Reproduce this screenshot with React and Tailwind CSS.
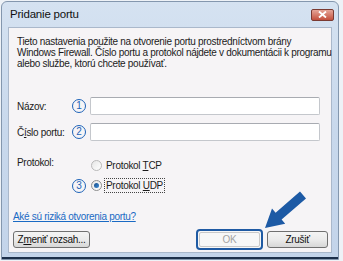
function Circled({ n }) {
  return (
    <span className="flex h-[14px] w-[14px] shrink-0 items-center justify-center rounded-full border-[1.5px] border-[#1d63b8] text-[10px] leading-none tracking-normal text-[#1d63b8]">
      {n}
    </span>
  );
}

function Radio({ checked, faded }) {
  return (
    <span
      className={`flex h-[11px] w-[11px] shrink-0 items-center justify-center rounded-full border ${
        faded ? "border-[#b9b9b9]" : "border-[#8e8f8f]"
      } bg-gradient-to-br from-[#e6e6e6] to-[#ffffff]`}
    >
      {checked && (
        <span className="h-[5px] w-[5px] rounded-full bg-gradient-to-br from-[#1a4f8a] to-[#3c8bd6]" />
      )}
    </span>
  );
}

export default function App() {
  return (
    <div
      className="relative h-[261px] w-[343px] overflow-hidden whitespace-nowrap bg-[#eef2f7] text-[10px] tracking-[-0.3px] text-[#1b1b1b]"
      style={{ fontFamily: '"Liberation Sans", Arial, sans-serif' }}
    >
      {/* Window */}
      <div className="ml-[1px] mt-[1px] flex h-[259px] w-[338px] flex-col rounded-t-[6px] border border-[#8497ae] bg-gradient-to-b from-[#d5e2f1] via-[#c8d8ec] to-[#c3d4ea]">
        {/* Title bar */}
        <div className="flex h-[25px] shrink-0 items-center justify-between pl-[8px] pr-[4px]">
          <span className="text-[11.5px] tracking-[-0.2px] text-[#111]">Pridanie portu</span>
          <span className="flex h-[12px] w-[23px] items-center justify-center rounded-[2px] border border-[#7a3a32] bg-gradient-to-b from-[#e5a598] to-[#c24e3c]">
            <svg width="9" height="7" viewBox="0 0 9 7">
              <path d="M1 0.5 L8 6.5 M8 0.5 L1 6.5" stroke="#ffffff" strokeWidth="1.8" />
            </svg>
          </span>
        </div>

        {/* Client area */}
        <div className="mx-[6px] flex h-[226px] shrink-0 flex-col border border-[#aab8cb] bg-[#f6f4f6] px-[8px] pt-[8px]">
          <p className="leading-[11px]">
            Tieto nastavenia použite na otvorenie portu prostredníctvom brány
            <br />
            Windows Firewall. Číslo portu a protokol nájdete v dokumentácii k programu
            <br />
            alebo službe, ktorú chcete používať.
          </p>

          {/* Name */}
          <div className="mt-[28px] flex h-[18px] items-center">
            <span className="w-[55px] shrink-0">Názov:</span>
            <Circled n="1" />
            <div className="ml-[4px] h-[18px] w-[230px] shrink-0 rounded-[2px] border border-[#c4c7cc] border-t-[#a8abb1] bg-white" />
          </div>

          {/* Port */}
          <div className="mt-[8px] flex h-[18px] items-center">
            <span className="w-[55px] shrink-0">
              Č<span className="underline">í</span>slo portu:
            </span>
            <Circled n="2" />
            <div className="ml-[4px] h-[18px] w-[230px] shrink-0 rounded-[2px] border border-[#c4c7cc] border-t-[#a8abb1] bg-white" />
          </div>

          {/* Protocol */}
          <div className="mt-[13px] flex">
            <span className="mt-[1px] w-[55px] shrink-0">Protokol:</span>
            <div className="flex flex-col">
              <div className="mt-[4px] flex h-[14px] items-center pl-[19px]">
                <Radio faded />
                <span className="ml-[4px]">
                  Protokol <span className="underline">T</span>CP
                </span>
              </div>
              <div className="mt-[6px] flex h-[15px] items-center">
                <Circled n="3" />
                <span className="ml-[5px]">
                  <Radio checked />
                </span>
                <span className="ml-[2px] border border-dotted border-[#444] px-[1px] leading-[13px]">
                  Protokol <span className="underline">U</span>DP
                </span>
              </div>
            </div>
          </div>

          {/* Link */}
          <div className="-ml-[4px] mt-[18px] leading-[12px]">
            <span className="text-[#1a6ac4] underline">Aké sú riziká otvorenia portu?</span>
          </div>

          {/* Buttons */}
          <div className="-ml-[4px] -mr-[5px] mt-[6px] flex items-center">
            <button className="flex h-[17px] w-[77px] items-center justify-center rounded-[3px] border border-[#707070] bg-gradient-to-b from-[#f4f4f4] via-[#ebebeb] to-[#d7d7d7] text-[10px] text-[#111]">
              Z<span className="underline">m</span>eniť rozsah...
            </button>
            <div className="ml-auto flex items-center gap-[4px]">
              <div className="flex h-[21px] w-[67px] items-center justify-center rounded-[4px] border-2 border-[#1f5aa3] bg-[#f7f7f7] p-[1px]">
                <span className="flex h-full w-full items-center justify-center rounded-[2px] border border-[#c9c9c9] text-[#a3a3a3]">
                  OK
                </span>
              </div>
              <button className="flex h-[17px] w-[61px] items-center justify-center rounded-[3px] border border-[#707070] bg-gradient-to-b from-[#f4f4f4] via-[#ebebeb] to-[#d7d7d7] text-[10px] text-[#111]">
                Zrušiť
              </button>
            </div>
          </div>
        </div>
        <div className="flex-1" />
        <div className="h-[2px] shrink-0 bg-[#1c2f4a]" />
      </div>

      {/* Annotation arrow */}
      <svg className="absolute left-0 top-0" width="343" height="261" viewBox="0 0 343 261">
        <polygon
          points="265,228 272,208.6 275.6,212.8 300,191.6 306,198.4 281.6,219.6 285.2,223.8"
          fill="#1d5aa5"
        />
      </svg>
    </div>
  );
}
